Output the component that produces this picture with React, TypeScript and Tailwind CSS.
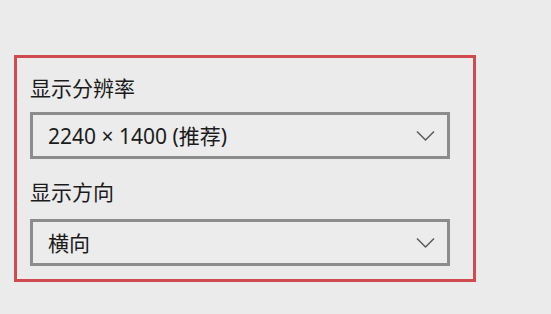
import React from "react"

const font = { fontFamily: '"Noto Sans", "Noto Sans CJK SC", sans-serif' }

function Chevron() {
  return (
    <svg width="19" height="12" viewBox="0 0 19 12" fill="none" className="shrink-0">
      <path d="M1 1.5 L9.5 10 L18 1.5" stroke="#5a5a5a" strokeWidth="1.5" />
    </svg>
  )
}

function Select({ value }: { value: string }) {
  return (
    <div className="flex items-center justify-between w-[420px] h-[47px] border-[3px] border-[#8c8c8c] bg-[#ececec] pl-[15px] pr-[12px]">
      <span className="text-[21px] leading-[28px] text-[#1b1b1b]">{value}</span>
      <Chevron />
    </div>
  )
}

export default function App() {
  return (
    <div className="w-[551px] h-[314px] bg-[#ebebeb] pt-[55px] pl-[14px] overflow-hidden" style={font}>
      <div className="flex flex-col w-[462px] h-[227px] border-[3px] border-[#cf4b50] pl-[13px] pt-[16px]">
        <div className="text-[21px] leading-[28px] text-[#1b1b1b]">显示分辨率</div>
        <div className="mt-[10px]">
          <Select value="2240 × 1400 (推荐)" />
        </div>
        <div className="mt-[19px] text-[21px] leading-[28px] text-[#1b1b1b]">显示方向</div>
        <div className="mt-[13px]">
          <Select value="横向" />
        </div>
      </div>
    </div>
  )
}
